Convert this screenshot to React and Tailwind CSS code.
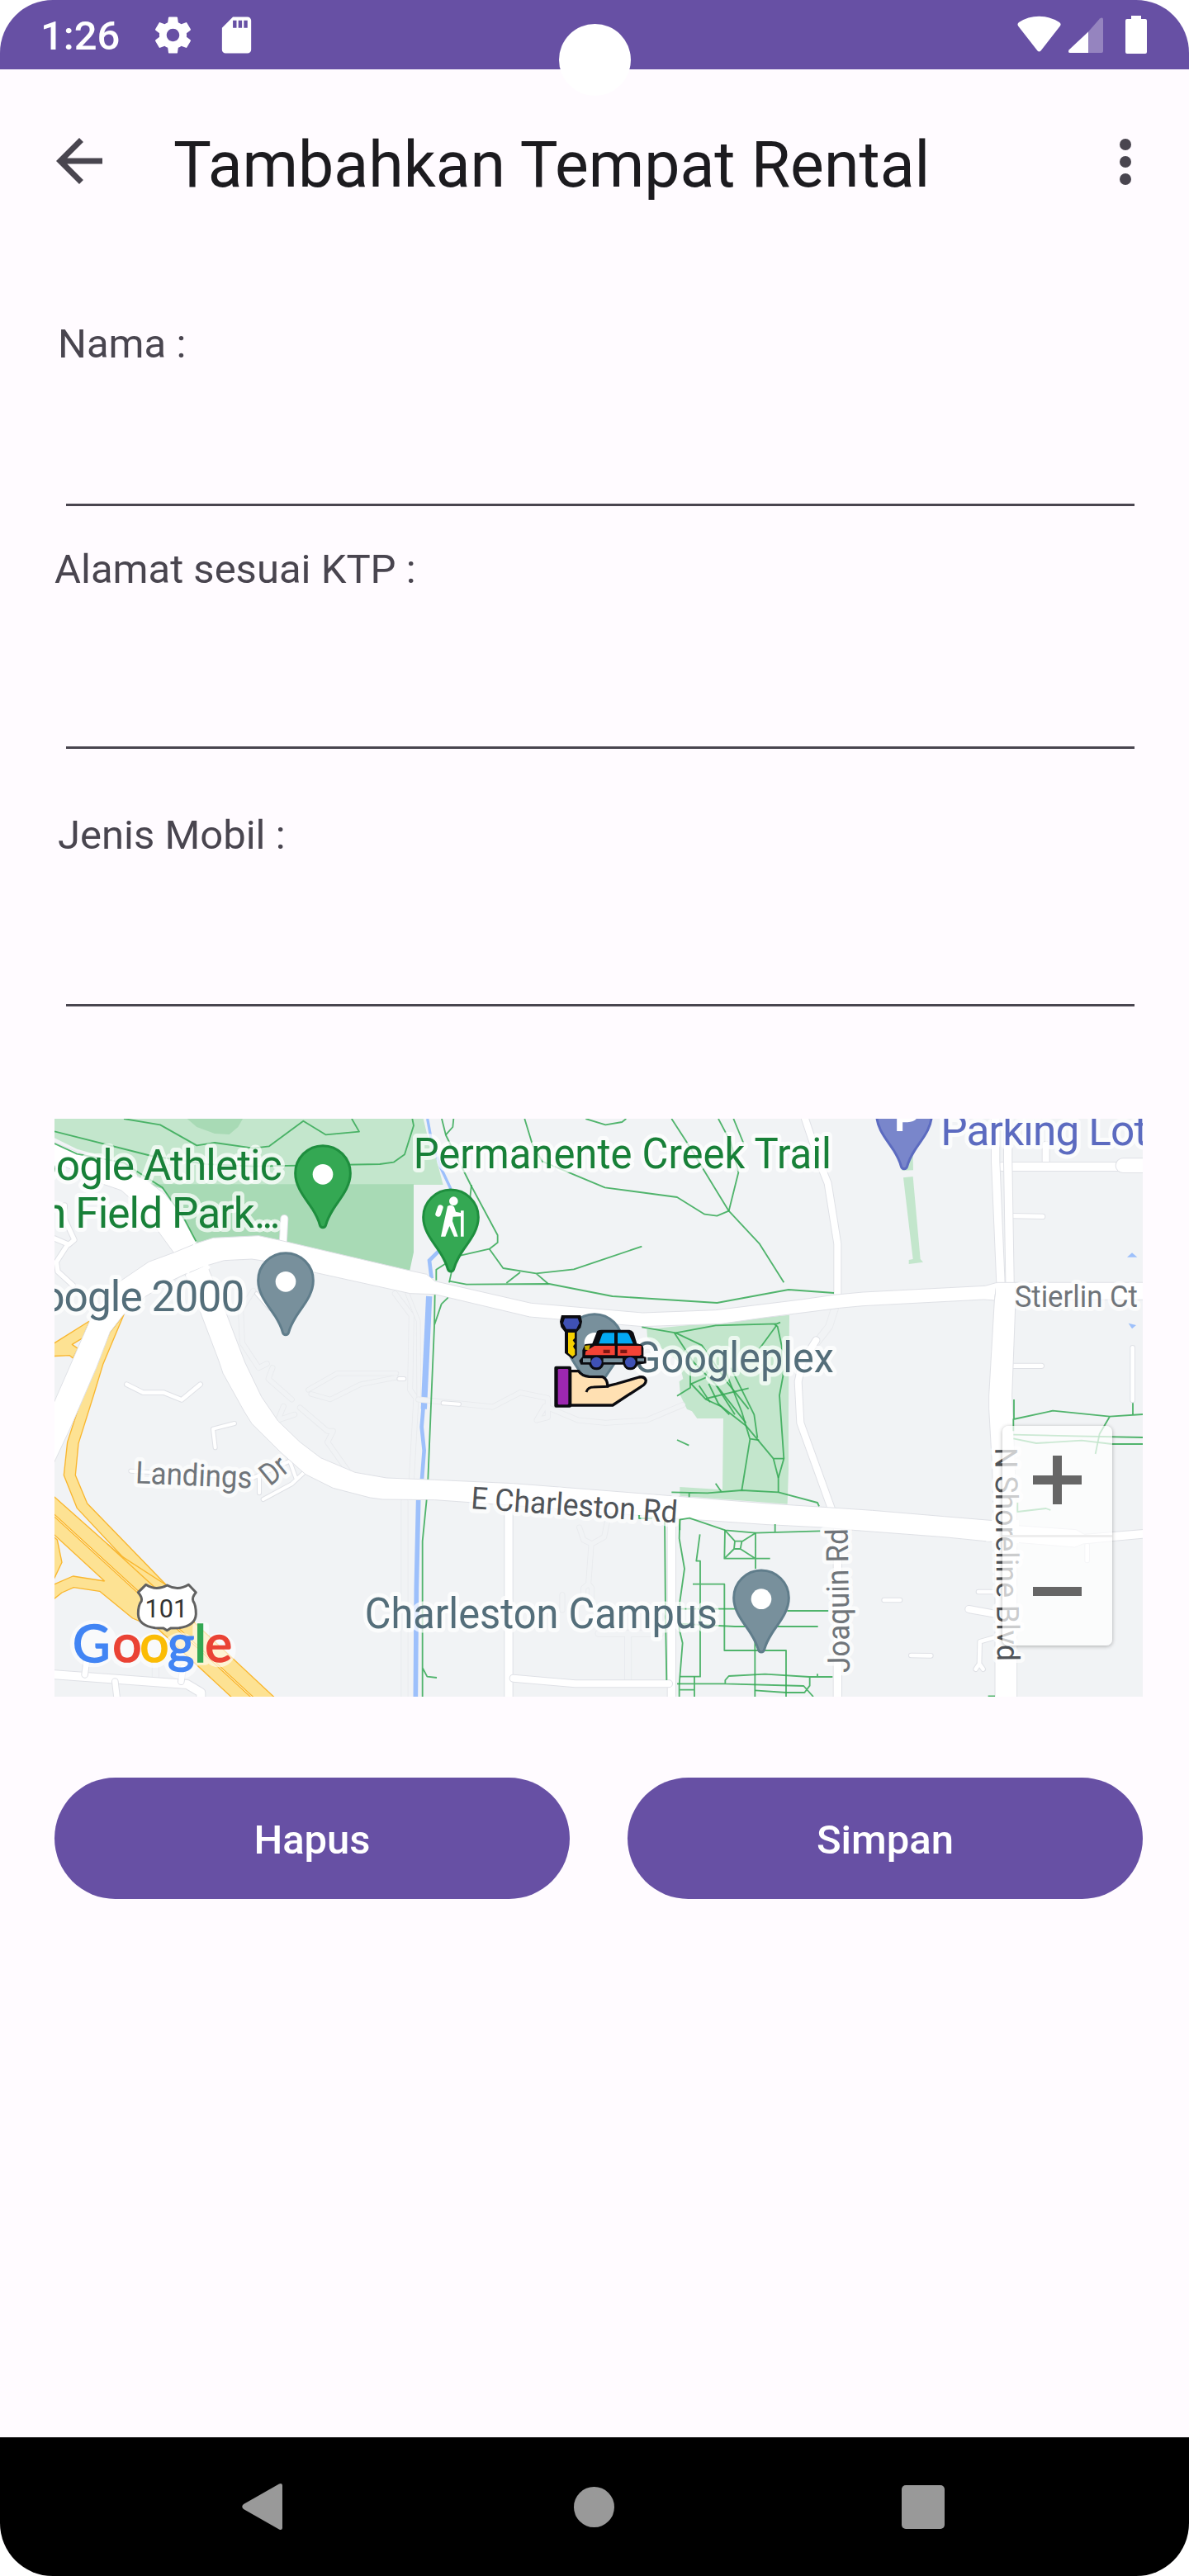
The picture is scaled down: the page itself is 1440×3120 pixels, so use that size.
import React from "react";

const PIN =
  "M-100,0 A100,100 0 0 1 100,0 C100,52 62,92 38,130 C22,156 15,172 11,188 Q8,197 0,197 Q-8,197 -11,188 C-15,172 -22,156 -38,130 C-62,92 -100,52 -100,0Z";

function Pin({ x, y, fill, stroke, children }) {
  return (
    <g transform={`translate(${x} ${y})`}>
      <path d={PIN} fill={fill} stroke={stroke} strokeWidth="9" />
      {children || <circle cy="4" r="37" fill="#fff" />}
    </g>
  );
}

function Label({ children, ...rest }) {
  return (
    <text
      fontFamily="Roboto, sans-serif"
      stroke="#ffffff"
      strokeOpacity="0.7"
      strokeWidth="30"
      strokeLinejoin="round"
      paintOrder="stroke"
      {...rest}
    >
      {children}
    </text>
  );
}

/* White street with a thin grey casing */
function Street({ d, w }) {
  return (
    <>
      <path d={d} stroke="#dfe1e6" strokeWidth={w + 6} />
      <path d={d} stroke="#ffffff" strokeWidth={w} />
    </>
  );
}

function Faint({ d, w = 22 }) {
  return (
    <>
      <path d={d} stroke="#e8eaed" strokeWidth={w + 5} />
      <path d={d} stroke="#f1f3f5" strokeWidth={w} />
    </>
  );
}

function CarRentalMarker() {
  return (
    <g transform="translate(1800 690)" strokeLinejoin="round">
      <path d="M90 69H160L165 92 160 114 146 130V214L130 228 102 206V130L88 112 84 92Z" fill="#0b0b10" />
      <path d="M102 80H149L155 97 144 119H108L96 98Z" fill="#3f51b5" />
      <path d="M114 132H138V152L131 160 139 172 132 182 139 194V212L130 219 114 206Z" fill="#f5d000" />
      <path d="M220 126 Q226 122 236 122H334Q346 122 352 132L364 172 Q388 174 388 190V218L398 222V244L368 248 Q358 268 340 268 322 268 314 248H244 Q236 268 218 268 198 268 190 248H160L154 234 166 220V196L176 174 202 172Z" fill="#0b0b10" />
      <path d="M226 172 L238 138 Q240 133 248 133H282V172Z M294 133H326Q332 133 336 140L350 172H294Z" fill="#03a9f4" />
      <path d="M176 214 L178 200 210 180H284V214Z M294 180H380V212L374 216H294Z" fill="#f44336" />
      <path d="M242 194H266V207H242Z M304 194H328V207H304Z" fill="#7d1712" />
      <path d="M174 180 L194 178 190 196 176 194Z" fill="#c9ad00" />
      <path d="M168 226H196V240H168Z M242 226H312V240H242Z M366 226H390V236H366Z" fill="#78909c" />
      <circle cx="217" cy="240" r="19" fill="#3f51b5" />
      <circle cx="340" cy="240" r="19" fill="#3f51b5" />
      <path
        d="M122 272 L152 272 Q164 290 190 292 L240 293 Q256 300 258 326 L290 318 372 294 Q392 290 397 306 396 320 380 328 L276 396H122Z"
        fill="#ffe0b2"
        stroke="#0b0b10"
        strokeWidth="10"
      />
      <path d="M180 348 Q186 330 206 330 L262 328" fill="none" stroke="#0b0b10" strokeWidth="9" />
      <rect x="64" y="254" width="62" height="150" rx="6" fill="#0b0b10" />
      <rect x="77" y="264" width="38" height="130" rx="4" fill="#9c27b0" />
    </g>
  );
}

function MapCanvas() {
  return (
    <svg viewBox="48 45 3954 2100" className="block h-full w-full" fill="none">
      <rect x="48" y="45" width="3954" height="2100" fill="#f1f3f5" />

      {/* parks */}
      <g fill="#c3e6cc">
        <path d="M48 45H1388L1400 95 1435 190 1460 285H400L380 270 290 215 225 182 130 155 48 115Z" />
        <path d="M2200 810 2718 758 2715 1100 2715 1320 2711 1445 2320 1415V1383L2475 1393 2478 1134H2383L2364 1108 2346 1100 2322 1050 2318 1000 2332 990 2318 930 2268 890 2202 840Z" />
        <path d="M3140 140 3166 150 3168 232 3127 233Z M3132 259 3167 255 3194 555 3204 566 3152 573V558L3167 555Z" />
      </g>
      <g fill="#a8dab5">
        <path d="M530 45 565 75 630 99 683 102 715 75 732 45Z" />
        <path d="M390 283H1353V530L1338 600 900 495 790 475 625 482 562 500 500 370 440 300Z" />
      </g>

      {/* creek and ponds */}
      <g stroke="#9dc0fb" strokeWidth="14">
        <path d="M1403 45 1415 110 1450 220 1488 300" strokeWidth="10" />
        <path d="M1488 470 1450 520 1410 560 1418 625" />
        <path d="M1409 690 1390 1100" strokeWidth="22" />
        <path d="M1389 1080 1382 1165 1391 1250 1383 1355" />
        <path d="M1370 1430 1363 1750 1360 2145" strokeWidth="17" />
      </g>
      <path d="M3945 548 3963 532 3982 548Z M3950 788 3978 795 3963 808Z" fill="#9dc0fb" />

      {/* service lanes and footways */}
      <g strokeLinejoin="round" strokeLinecap="round">
        <Faint d="M1285 680 1345 760 1340 1030 1362 1060 1345 1360" w={16} />
        <Faint d="M1330 680 1370 780 1372 1060" w={12} />
        <Faint d="M770 670 725 740 730 860 790 950 820 935 M840 950 825 990 910 1065" w={16} />
        <Faint d="M970 1030 1075 970 1290 970 M980 1045 1050 1065 1160 1010 1290 985" w={14} />
        <Faint d="M880 1090 860 1140 920 1120 M940 1095 1040 1180 1060 1180 1040 1220 1125 1340" w={16} />
        <Faint d="M1370 1065 1640 1092 1740 1040 1840 1060 1840 1130 1800 1140 1830 1090 1950 1140 2050 1150 2200 1140 2330 1085" w={16} />
        <Faint d="M1320 1435V2145" w={22} />
        <Faint d="M1955 1530 1970 1575 2000 1590 2045 1565 2055 1515 M1998 1595 1988 1735 M1970 1790V1750L1988 1735 2000 1750V1800 M1893 1775V1830" w={16} />
        <Faint d="M2025 1915H2250 M2132 1925V2085" w={22} />
        <Faint d="M2883 735 2862 800 2800 880" w={24} />
        <Faint d="M415 2000V2085" w={22} />
      </g>

      {/* minor streets */}
      <g strokeLinejoin="round" strokeLinecap="round">
        <Street d="M310 1010 370 1040 445 1040 510 1066 578 1010" w={14} />
        <Street d="M883 408 878 500" w={24} />
        <Street d="M85 360V410L120 485 100 502 48 480 M92 508 55 565 60 600 115 650" w={16} />
        <Street d="M782 680 830 735" w={10} />
        <Street d="M1460 1078 1518 1082" w={12} />
        <Street d="M1300 990H1318" w={12} />
        <Street d="M632 1240 624 1172 702 1152" w={12} />
        <Street d="M325 1325 770 1350 900 1290 M806 1428 910 1372 955 1330 M905 1295 925 1350 M792 1350V1405" w={12} />
        <Street d="M48 2065 530 2100 580 2130V2150" w={30} />
        <Street d="M165 2010 158 2065 M268 2090 275 2150 M515 2040 508 2090" w={20} />
        <Street d="M1698 1460V2150" w={28} />
        <Street d="M2290 1500V2150" w={28} />
        <Street d="M1715 2078 1940 2098H2280" w={24} />
        <Street d="M2775 45 2790 90 2830 210 2858 280 2893 500V700" w={24} />
        <Street d="M2815 850 2765 930 2750 1000 2758 1150 2870 1460" w={24} />
        <Street d="M2893 1540V2150" w={28} />
        <Street d="M3530 398 3638 400 M3530 943H3634" w={16} />
        <Street d="M3965 877V1068" w={14} />
        <Street d="M3062 1794H3120 M3160 1995 3232 1996 M3405 1764H3480 M3800 1595V1650" w={14} />
        <Street d="M3370 1827 3480 1847" w={24} />
        <Street d="M3480 1925 3410 1945 3408 2030 M3408 2025 3395 2045 M3408 2025 3422 2045" w={14} />
        <Street d="M3650 140V215" w={24} />
        <Street d="M3490 219H3915L3935 215" w={30} />
        <Street d="M3930 215H4010" w={50} />
        <Street d="M3512 671H4010" w={60} />
        <Street d="M3467 40V200L3488 690" w={28} />
        <Street d="M3512 40V200L3520 690" w={28} />
      </g>

      {/* freeway */}
      <g fill="#fde293" stroke="#f9b62e" strokeWidth="4" strokeLinejoin="round">
        <path d="M40 865 175 780 150 842 112 865 133 880 115 915 103 905 40 908Z" />
        <path d="M40 1560 58 1575 75 1657 40 1730Z" />
        <path d="M300 757 250 820 150 1050 95 1220 82 1340 130 1460 420 1770 455 1740 167 1443 124 1340 135 1225 190 1050 225 935Z" />
        <path d="M40 1412 285 1630 455 1740 550 1870 855 2155H700L425 1900 332 1860 212 1762 118 1748 75 1767 40 1795V1740L115 1707 230 1725 40 1550Z" />
      </g>
      <path d="M235 1722 330 1810 215 1740Z M280 1640 440 1780 300 1650Z" fill="#fde293" />
      <path d="M40 1480 355 1768 775 2155" stroke="#f9b62e" strokeWidth="10" />
      <path d="M40 1480 355 1768 775 2155" stroke="#fff6dc" strokeWidth="3" />
      <path d="M240 1590 420 1755" stroke="#f9b62e" strokeWidth="4" />

      {/* arterials */}
      <g fill="#ffffff" stroke="#dfe1e6" strokeWidth="3" strokeLinejoin="round">
        <path d="M40 128 130 165 230 205 385 270 450 320 500 380 565 497 522 610 480 530 400 420 330 340 290 305 225 283 160 250 40 200Z" />
        <path d="M522 610 575 740 645 925 660 970 738 1110 765 1153 870 1257 960 1337 1060 1387 1195 1422 1240 1428 1430 1430 1710 1450 2320 1498 2640 1520 2840 1530 2950 1540 3280 1565 3460 1583V1505L3280 1490 3020 1468 2855 1457 2640 1443 2290 1415 1715 1370 1430 1357 1255 1350 1140 1330 1015 1277 940 1220 860 1143 800 1055 740 930 660 720 603 578Z" />
        <path d="M40 1090 180 770 265 650 390 565 485 530 565 497 625 478 790 470 865 486 1340 597 1400 610 1430 635 1780 715 2185 750 2450 740 2760 702 2880 685 2985 675 3430 652 3472 640 3463 705 3425 702 2985 725 2900 733 2640 766 2470 790 2185 800 1775 765 1430 683 1340 680 1000 605 810 562 765 555 665 560 603 578 522 610 460 640 380 690 300 755 250 820 200 950 105 1170 40 1308Z" />
        <path d="M3472 640 3463 705 3443 1050 3443 1100 3455 1310 3460 1505 3465 1750V2155H3545V1520L3532 1150 3527 1050 3540 705 3538 640Z" />
        <path d="M3545 1523 3760 1538 3790 1555 4010 1537V1569L3890 1580 3785 1590 3755 1602 3545 1585Z" />
      </g>
      <path
        d="M560 500 530 608 M550 530 610 590 M3440 655V700 M3475 690H3560V650H3475Z M3440 1510V1580 M3462 1510H3545V1580H3462Z"
        stroke="#ffffff"
        strokeWidth="14"
      />
      <path d="M540 612 600 584 M3545 1530V1580" stroke="#ffffff" strokeWidth="12" />

      {/* walking trails */}
      <g stroke="#34a853" strokeOpacity="0.85" strokeWidth="5.5" strokeLinejoin="round">
        <path d="M300 45 432 67 565 142 630 132 770 152 828 145 952 53 1033 103 1155 92 1128 45" />
        <path d="M48 91 400 180 600 210 770 218 1230 210 1280 203 1320 175 1353 70 1348 45" />
        <path d="M48 135 130 173 300 205 340 232 440 295 520 410 562 490" />
        <g transform="translate(1320 0)">
          <path d="M135 45 150 105 240 285 338 468V495L308 518 190 545 115 593V632" />
          <path d="M178 45 175 75 150 103 M243 285 238 330 M172 595 162 640" />
          <path d="M308 518 358 588 478 607 615 592 862 509 M420 603 370 642 M478 607 522 645" />
          <path d="M162 635 225 647 525 645 755 690 1135 714 1395 666 1560 678" />
          <path d="M110 685 108 800 95 1110 85 1355 M158 695 134 718 108 795" />
          <path d="M80 1430 65 1580V2145 M65 2040 82 2072 117 2076" />
          <path d="M436 45 465 140 500 200 728 295 990 330 1090 392 1135 398 1178 380" />
          <path d="M658 45 730 67 790 57 805 45 M970 45 1025 130 1178 380 1290 500 1378 640" />
          <path d="M1140 45 1185 130 1213 240 1178 380 M1195 45 1232 135" />
          <path d="M862 802 985 823 1130 796 1350 790 M1365 785 1345 793 1355 800 1370 870 1375 980 1362 1050 1378 1280 1358 1350V1402" />
          <path d="M1352 795 1290 880 M980 823 1050 930 1130 1010 1240 1150 M985 823 1080 868 1170 1000 1250 1100" />
          <path d="M1038 960 1038 1022 990 1052 M1038 1005 1095 1065 1150 1090 1240 1160 1340 1280H1378 M1340 1280 1358 1350" />
          <path d="M1105 1008 1140 1080 1180 1120 M1130 1010 1200 1120 M1165 960 1225 1110 1255 1210 1225 1395 M1185 950 1270 1120 1282 1205 M1255 1208 1288 1213" />
          <path d="M1038 1010 1095 985 M1095 1062 1250 1024 M1070 1015 1110 1075" />
          <path d="M990 1212 1033 1232 M970 1402 1100 1405 1225 1395 1358 1402 1500 1440 1506 1453 M1130 1370 1152 1402 M1034 1405V1420" />
          <path d="M852 1485V1497H900 M945 1500 948 1850 952 2085" />
          <path d="M1000 1540V1502L1035 1496 1165 1540 1275 1550 1510 1543 M1346 1518V1550" />
          <path d="M1000 1500 998 1570 1017 1680 1000 1800 998 1900 1010 1950 998 2100V2145" />
          <path d="M1073 1555 1060 1652H1074V2072H1000 M1047 1736H1162V1977H1386V2145" />
          <path d="M1164 1540 1162 1643H1328 M1275 1550V1680 M1164 1540 1200 1580 1197 1608 1162 1643 M1275 1550 1225 1582 1220 1608 1275 1643 M1200 1580H1225 M1197 1608H1220" />
          <path d="M1000 1826H1200 M1390 1833H1540 M1000 1880 1200 1890H1502 M1273 1930V2145" />
          <path d="M1165 2100V2085L1178 2070 1310 2063 1470 2073H1555 M1500 2075V2062 M990 2098H1165L1450 2106 1485 2145 M1472 2073V2105L1453 2130H1386L1273 2122 M1000 2120H1054 M1053 2072V2145" />
        </g>
        <g transform="translate(2640 1050)">
          <path d="M894 15V87 M892 130V87L1035 56 1242 77 1362 69 M1242 77 1205 140 1190 213 M1326 28V69" />
          <path d="M892 143 1120 148 1362 153 M892 157 975 174 1140 164 1250 177H1362 M907 390V423L1010 411 1027 417 M800 1093H825" />
        </g>
      </g>

      {/* road names */}
      <g fontSize="112" fill="#70757a">
        <Label x="3536" y="728" textLength="448" lengthAdjust="spacingAndGlyphs">Stierlin Ct</Label>
        <Label transform="translate(1559 1461) rotate(4)" textLength="752" lengthAdjust="spacingAndGlyphs" fill="#505459">
          E Charleston Rd
        </Label>
        <Label transform="translate(2937 2057) rotate(-90.8)" textLength="524" lengthAdjust="spacingAndGlyphs">
          Joaquin Rd
        </Label>
        <Label transform="translate(3466 1240) rotate(89.4)" textLength="776" lengthAdjust="spacingAndGlyphs" fill="#505459">
          N Shoreline Blvd
        </Label>
        <Label transform="translate(341 1369) rotate(2.5)" textLength="424" lengthAdjust="spacingAndGlyphs">Landings</Label>
        <Label transform="translate(831 1382) rotate(-39)" textLength="96" lengthAdjust="spacingAndGlyphs">Dr</Label>
      </g>

      {/* pins and place names */}
      <Pin x="1023" y="243" fill="#34a853" stroke="#1e8e3e" />
      <Pin x="888" y="633" fill="#78909c" stroke="#607d8b" />
      <Pin x="2616" y="1786" fill="#78909c" stroke="#607d8b" />
      <Pin x="2010" y="855" fill="#78909c" stroke="#607d8b" />
      <Pin x="3135" y="30" fill="#7986cb" stroke="#5c6bc0">
        <path d="M-16 60V-40H14Q42 -38 42 -10 42 16 12 17H-16" stroke="#fff" strokeWidth="21" />
      </Pin>
      <Pin x="1488" y="403" fill="#34a853" stroke="#1e8e3e">
        <g fill="#fff">
          <circle cx="10" cy="-59" r="16" />
          <path d="M-12 -40 Q2 -48 12 -38L18 -20 36 -16V-24H47V70H36V-3L8 -2 6 14 26 70H12L-5 32 -20 70H-36L-24 14Z" />
          <path d="M-38 -35 -46 -12" stroke="#fff" strokeWidth="20" strokeLinecap="round" />
        </g>
      </Pin>
      <g fontSize="154">
        <g fill="#188038">
          <Label x="872" y="267" textAnchor="end" letterSpacing="-2.7">Google Athletic</Label>
          <Label x="858" y="441" textAnchor="end" letterSpacing="-2.7">
            n Field Park<tspan letterSpacing="-12.5">...</tspan>
          </Label>
          <Label x="1352" y="225" textLength="1519" lengthAdjust="spacingAndGlyphs">Permanente Creek Trail</Label>
        </g>
        <g fill="#546e7a">
          <Label x="736" y="744" textAnchor="end" letterSpacing="-2.7">Google 2000</Label>
          <Label x="2152" y="965" textLength="728" lengthAdjust="spacingAndGlyphs">Googleplex</Label>
          <Label x="1175" y="1895" textLength="1282" lengthAdjust="spacingAndGlyphs">Charleston Campus</Label>
        </g>
        <Label x="3268" y="140" fill="#5c6bc0" letterSpacing="-2.6">Parking Lot</Label>
      </g>

      {/* route shield */}
      <path
        d="M380 1738 Q418 1762 457 1740 496 1762 535 1738L562 1766 Q546 1784 552 1798 562 1812 562 1845 560 1888 500 1895L470 1896 457 1904 444 1896 414 1895 Q354 1888 352 1845 352 1812 364 1798 368 1784 352 1766Z"
        fill="#fff"
        stroke="#616161"
        strokeWidth="9"
        strokeLinejoin="round"
      />
      <text x="454" y="1857" textAnchor="middle" fontFamily="Roboto, sans-serif" fontSize="92" fill="#333">101</text>

      {/* wordmark */}
      <g fill="#ffffff" opacity="0.6">
        <circle cx="190" cy="1952" r="86" />
        <circle cx="311" cy="1976" r="64" />
        <circle cx="411" cy="1976" r="64" />
        <circle cx="505" cy="1976" r="64" />
        <circle cx="508" cy="2018" r="62" />
        <circle cx="645" cy="1976" r="62" />
        <rect x="550" y="1875" width="60" height="155" rx="14" />
      </g>
      <text
        y="2018"
        x="114 259 358 459 556 595"
        fontFamily="Lato, sans-serif"
        fontSize="187"
        strokeWidth="5"
      >
        <tspan fill="#4285f4" stroke="#4285f4">G</tspan>
        <tspan fill="#ea4335" stroke="#ea4335">o</tspan>
        <tspan fill="#fbbc05" stroke="#fbbc05">o</tspan>
        <tspan fill="#4285f4" stroke="#4285f4">g</tspan>
        <tspan fill="#34a853" stroke="#34a853">l</tspan>
        <tspan fill="#ea4335" stroke="#ea4335">e</tspan>
      </text>

      <CarRentalMarker />
    </svg>
  );
}

function StatusBar() {
  return (
    <header className="relative flex h-[84px] items-center bg-[#6750a4] pl-[49px] pr-[50px] text-white">
      <span className="pt-[4px] text-[49px] leading-[60px] font-medium">1:26</span>
      <svg viewBox="0 0 24 24" className="ml-[38px] size-[53px]" fill="currentColor">
        <path d="M19.43 12.98c.04-.32.07-.64.07-.98s-.03-.66-.07-.98l2.11-1.65c.19-.15.24-.42.12-.64l-2-3.46c-.12-.22-.39-.3-.61-.22l-2.49 1c-.52-.4-1.08-.73-1.69-.98l-.38-2.65C14.46 2.18 14.25 2 14 2h-4c-.25 0-.46.18-.49.42l-.38 2.65c-.61.25-1.17.59-1.69.98l-2.49-1c-.23-.09-.49 0-.61.22l-2 3.46c-.13.22-.07.49.12.64l2.11 1.65c-.04.32-.07.65-.07.98s.03.66.07.98l-2.11 1.65c-.19.15-.24.42-.12.64l2 3.46c.12.22.39.3.61.22l2.49-1c.52.4 1.08.73 1.69.98l.38 2.65c.03.24.24.42.49.42h4c.25 0 .46-.18.49-.42l.38-2.65c.61-.25 1.17-.59 1.69-.98l2.49 1c.23.09.49 0 .61-.22l2-3.46c.12-.22.07-.49-.12-.64l-2.11-1.65zM12 15.5c-1.93 0-3.5-1.57-3.5-3.5s1.57-3.5 3.5-3.5 3.5 1.57 3.5 3.5-1.57 3.5-3.5 3.5z" />
      </svg>
      <svg viewBox="0 0 24 24" className="ml-[24px] size-[53px]" fill="currentColor">
        <path d="M18 2h-8L4.02 8 4 20c0 1.1.9 2 2 2h12c1.1 0 2-.9 2-2V4c0-1.1-.9-2-2-2zm-6 6h-2V4h2v4zm3 0h-2V4h2v4zm3 0h-2V4h2v4z" />
      </svg>
      <svg viewBox="0 0 158 46" className="ml-auto h-[46px] w-[158px]" fill="currentColor">
        <path d="M1.5 13Q-.8 10 2 8 13 .7 26.500 .7 40 .7 51 8 54 10 51.500 13L28.500 42.500Q26.500 44.500 24.500 42.500Z" />
        <path d="M100 3.500Q104 1 104 5V43Q104 45 102 45H86V19.500Z" opacity="0.3" />
        <path d="M86 19.500V45H64Q61 45 62.500 41.500Z" />
        <path d="M138 0H150V4H155Q157 4 157 6V44Q157 46 155 46H133Q131 46 131 44V6Q131 4 133 4H138Z" />
      </svg>
      <div className="absolute top-[29px] left-[677px] size-[87px] rounded-full bg-white" />
    </header>
  );
}

function Field({ label, className, inputClassName }) {
  return (
    <label className={className}>
      <span className="block text-[49px] leading-[60px]">{label}</span>
      <input className={inputClassName} />
    </label>
  );
}

export default function App() {
  return (
    <div className="h-[3120px] w-[1440px] bg-white">
      <div className="flex h-full flex-col overflow-hidden rounded-[64px] bg-[#fffbff] font-['Roboto',sans-serif] text-[#49454f]">
        <StatusBar />

        <div className="flex h-[224px] items-center pr-[35px] pl-[54px]">
          <svg viewBox="0 0 24 24" className="mb-[3px] size-[84px]" fill="currentColor">
            <path d="M20 11H7.830l5.590-5.590L12 4l-8 8 8 8 1.410-1.410L7.830 13H20v-2z" />
          </svg>
          <h1 className="ml-[72px] pt-[8px] text-[77px] leading-[98px] text-[#1c1b1f]">Tambahkan Tempat Rental</h1>
          <svg viewBox="0 0 24 24" className="ml-auto size-[84px]" fill="currentColor">
            <circle cx="12" cy="6" r="2" />
            <circle cx="12" cy="12" r="2" />
            <circle cx="12" cy="18" r="2" />
          </svg>
        </div>

        <main className="flex flex-1 flex-col pr-[56px] pl-[66px] pt-[79px]">
          <Field
            label="Nama :"
            className="block pl-[4px]"
            inputClassName="ml-[10px] block h-[166px] w-[1294px] border-b-[3px] border-[#49454f] bg-transparent text-[49px] outline-none"
          />
          <Field
            label="Alamat sesuai KTP :"
            className="mt-[47px] block"
            inputClassName="ml-[14px] block h-[187px] w-[1294px] border-b-[3px] border-[#49454f] bg-transparent text-[49px] outline-none"
          />
          <Field
            label="Jenis Mobil :"
            className="mt-[75px] block pl-[4px]"
            inputClassName="ml-[10px] block h-[177px] w-[1294px] border-b-[3px] border-[#49454f] bg-transparent text-[49px] outline-none"
          />

          <section className="relative mt-[136px] h-[700px] w-[1318px] overflow-hidden">
            <MapCanvas />
            <div className="absolute top-[372px] left-[1148px] flex h-[266px] w-[133px] flex-col rounded-[7px] bg-white/70 shadow-[0_1px_5px_rgba(0,0,0,0.3)]">
              <button aria-label="+" className="flex flex-1 items-center justify-center border-b-[3px] border-[#eeeeee]">
                <svg viewBox="0 0 59 59" className="size-[59px]" fill="#666666">
                  <path d="M24 0h11v24h24v11H35v24H24V35H0V24h24z" />
                </svg>
              </button>
              <button aria-label="−" className="flex flex-1 items-center justify-center">
                <span className="block h-[11px] w-[59px] bg-[#666666]" />
              </button>
            </div>
          </section>

          <div className="mt-[98px] flex w-[1318px] gap-[70px] text-[49px] leading-[60px] font-medium text-white">
            <button className="h-[147px] flex-1 rounded-full bg-[#6750a4] pt-[4px]">Hapus</button>
            <button className="h-[147px] flex-1 rounded-full bg-[#6750a4] pt-[4px]">Simpan</button>
          </div>
        </main>

        <nav className="flex h-[168px] items-center bg-black pl-[293px]">
          <svg viewBox="0 0 49 58" className="h-[58px] w-[49px]" fill="#999999">
            <path d="M49 3V55Q48.500 58 45 56.500L2 32Q-1.500 29 2 26L45 1.500Q48.500 0 49 3Z" />
          </svg>
          <span className="ml-[353px] size-[49px] rounded-full bg-[#999999]" />
          <span className="ml-[348px] h-[53px] w-[52px] rounded-[5px] bg-[#999999]" />
        </nav>
      </div>
    </div>
  );
}
